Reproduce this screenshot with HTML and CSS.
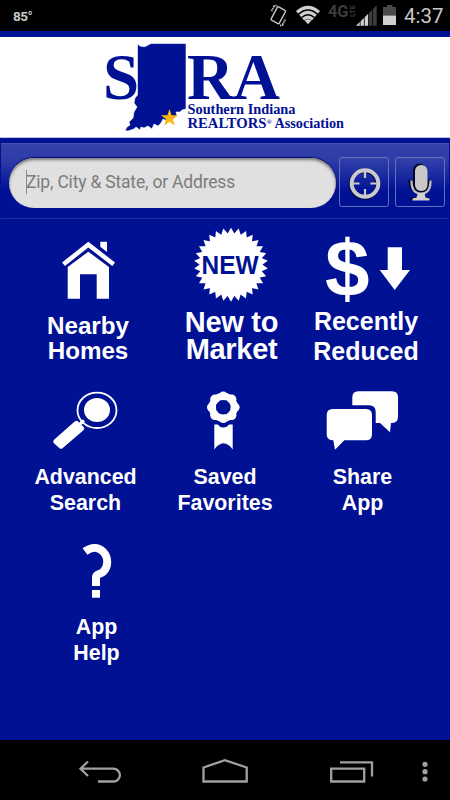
FILE: index.html
```html
<!DOCTYPE html>
<html lang="en">
<head>
    <meta charset="utf-8">
    <title>Southern Indiana REALTORS Association</title>
    <link rel="stylesheet" href="styles.css">
</head>
<body>
    <div class="statusbar">
        <span class="temp">85°</span>
        <svg class="statusicons" width="130" height="31" viewBox="268 0 130 31">
            <g fill="none" stroke="#c8c8c8" stroke-width="1.4">
                <rect x="-4.600" y="-7.500" width="9.200" height="15" rx="1" transform="translate(278.3 15.3) rotate(28)"/>
                <path d="M271.500 11l3-5.500M273.500 6l3.500-.5M280 25.500l3.500-.5M282.500 24.500l3-5.500" stroke-width="1.800" stroke-dasharray="1.300 .7"/>
            </g>
            <g fill="none" stroke="#d0d0d0" stroke-width="3.200">
                <path d="M297 12.200Q308 2.800 319 12.200"/>
                <path d="M300.200 15.900Q308 9 315.800 15.900"/>
                <path d="M303.100 19.300Q308 15 312.900 19.300"/>
            </g>
            <path d="M308 24.300l-3.300-3.800q3.300-2.400 6.600 0z" fill="#d0d0d0"/>
            <text class="net" x="328" y="17" textLength="20.500" lengthAdjust="spacingAndGlyphs">4G</text>
            <text class="lte" transform="translate(355.200 17) rotate(-90)" textLength="12" lengthAdjust="spacingAndGlyphs">LTE</text>
            <path d="M356 25.700L376.700 5.300V25.700z" fill="#3c3c3c"/>
            <path d="M356 25.700L368.500 13.400V25.700z" fill="#d0d0d0"/>
            <path d="M360.200 19v7M364.300 15v11M368.500 12v14M372.600 8v18" stroke="#000" stroke-width=".8"/>
            <path d="M387 5h5.500v2h3.500v8.500h-13v-8.500h4z" fill="#494949"/>
            <path d="M383 15.500h13v9.500h-13z" fill="#d0d0d0"/>
        </svg>
        <span class="clock">4:37</span>
    </div>

    <div class="logo">
        <svg width="450" height="100" viewBox="0 37 450 100">
            <g class="logotext">
                <text class="big" x="103" y="99">S</text>
                <text class="big" x="187" y="99" textLength="93">RA</text>
                <text class="small" x="187.500" y="113.500" textLength="108" lengthAdjust="spacingAndGlyphs">Southern Indiana</text>
                <text class="small" x="187.500" y="127.500" textLength="79" lengthAdjust="spacingAndGlyphs">REALTORS</text>
                <text class="reg" x="266.500" y="123.500">®</text>
                <text class="small" x="274.500" y="127.500" textLength="69.500" lengthAdjust="spacingAndGlyphs">Association</text>
            </g>
            <path d="M137.500 44L140 46Q145 48 148 45L151 43.500H186V109L182 110 180 112 176 112 177 116 173 119 171 122 167 121 163 119 161 123 158 126 154 124 152 129 148 126 144 128 141 127 140 130 136 127 134 129 131 130 128 131 125 130.500 127 127 130 125 129 122 133 118 134 112 137 107 134 103 135 98 137.500 95z" fill="#001194" stroke="#fff" stroke-width=".6"/>
            <path d="M169.500 109l2.100 6.200 6.400.1-5.100 3.900 1.900 6.200-5.300-3.700-5.300 3.700 1.900-6.200-5.100-3.900 6.400-.1z" fill="#ffb612"/>
        </svg>
    </div>

    <div class="searchbar">
        <div class="searchinput"><span class="cursor"></span>Zip, City &amp; State, or Address</div>
        <div class="searchbut">
            <svg width="48" height="48" viewBox="340 157 48 48">
                <circle cx="364" cy="183.500" r="13.500" fill="none" stroke="#000a55" stroke-width="4"/>
                <circle cx="365" cy="182.500" r="13.300" fill="none" stroke="#cacaca" stroke-width="4"/>
                <path d="M365 171v6M365 188v6M353.500 182.500h6M370.500 182.500h6" stroke="#cacaca" stroke-width="2.200"/>
            </svg>
        </div>
        <div class="searchbut">
            <svg width="48" height="48" viewBox="396 157 48 48">
                <g transform="translate(-1.500 -1)" fill="#000528" stroke="#000528">
                    <rect x="415" y="164" width="12" height="26" rx="6"/>
                    <path d="M411.500 180q0 12 9.500 12t9.500-12M421 192v6M412.500 198.500h17" fill="none" stroke-width="3"/>
                </g>
                <rect x="415" y="164" width="12.500" height="26" rx="6" fill="#c8c8c8"/>
                <path d="M411.500 179.500v1q0 12 9.500 12t9.500-12v-1" fill="none" stroke="#bdbdbd" stroke-width="2.200"/>
                <path d="M418 192h6.500l1 4.500 4 1v2h-17v-2l4-1z" fill="#d2d2d2"/>
            </svg>
        </div>
    </div>

    <div class="menu">
        <div class="item nearby">
            <svg width="150" height="84" viewBox="0 219 150 84">
                <path d="M62 262.500L88.300 241.700 115 262.500 112.300 266 88.300 247.500 65 266z"/>
                <path d="M100.300 241.700H107V252L100.300 246.700z"/>
                <path d="M67.700 267L88.300 251.700 109 267V298.700H96.700V274.300H80V298.700H67.700z"/>
            </svg>
            <p>Nearby<br>Homes</p>
        </div>
        <div class="item newmarket">
            <svg width="150" height="84" viewBox="150 219 150 84">
                <defs><path id="tri" d="M0-37L32 18.500H-32z"/></defs>
                <g transform="translate(231 264.700)">
                    <use href="#tri"/>
                    <use href="#tri" transform="rotate(12)"/>
                    <use href="#tri" transform="rotate(24)"/>
                    <use href="#tri" transform="rotate(36)"/>
                    <use href="#tri" transform="rotate(48)"/>
                    <use href="#tri" transform="rotate(60)"/>
                    <use href="#tri" transform="rotate(72)"/>
                    <use href="#tri" transform="rotate(84)"/>
                    <use href="#tri" transform="rotate(96)"/>
                    <use href="#tri" transform="rotate(108)"/>
                </g>
                <text class="newtext" x="201.500" y="273.500" textLength="57" lengthAdjust="spacingAndGlyphs">NEW</text>
            </svg>
            <p>New to<br>Market</p>
        </div>
        <div class="item reduced">
            <svg width="150" height="84" viewBox="300 219 150 84">
                <text class="dollar" x="325" y="295.500">$</text>
                <path d="M387.700 247.300H402V270H410L394.700 290 379.700 270H387.700z"/>
            </svg>
            <p>Recently<br>Reduced</p>
        </div>
        <div class="item search">
            <svg width="150" height="84" viewBox="0 371 150 84">
                <ellipse cx="97" cy="410.300" rx="19.500" ry="17.700" fill="none" stroke="#fff" stroke-width="1.800"/>
                <ellipse cx="97" cy="410" rx="13" ry="12"/>
                <path d="M76.500 423L82 428.500 61 446.500 55.500 441.500z" stroke="#fff" stroke-width="4.500" stroke-linejoin="round"/>
                <path d="M80 424l4-3.500" stroke="#fff" stroke-width="3"/>
            </svg>
            <p>Advanced<br>Search</p>
        </div>
        <div class="item saved">
            <svg width="150" height="84" viewBox="150 371 150 84">
                <g transform="translate(223.300 407.300)">
                    <circle r="11" fill="none" stroke="#fff" stroke-width="7"/>
                    <circle cx="0" cy="-11" r="4.800"/>
                    <circle cx="8.300" cy="-8" r="4.800"/>
                    <circle cx="11.500" cy="0" r="4.800"/>
                    <circle cx="8.300" cy="8" r="4.800"/>
                    <circle cx="0" cy="11" r="4.800"/>
                    <circle cx="-8.300" cy="8" r="4.800"/>
                    <circle cx="-11.500" cy="0" r="4.800"/>
                    <circle cx="-8.300" cy="-8" r="4.800"/>
                    <circle r="7.300" fill="#001194"/>
                </g>
                <path d="M214.300 424.500H218Q219.500 427.500 223.300 427.500T229 424.500H232.700V449.500Q228.500 443.500 223.500 443.300 218.500 443.500 214.300 449.500z"/>
            </svg>
            <p>Saved<br>Favorites</p>
        </div>
        <div class="item share">
            <svg width="150" height="84" viewBox="300 371 150 84">
                <path d="M332.700 409H366q6 0 6 6v19.300q0 6-6 6H344.300L335 449.700 333.300 440.300q-6.600 0-6.600-6V415q0-6 6-6z"/>
                <path d="M352.300 405.300V397.300q0-6 6-6H392q6 0 6 6V417q0 6-7 6L390 432.300 380 423H375.700V412q0-6.700-6.700-6.700z"/>
            </svg>
            <p>Share<br>App</p>
        </div>
        <div class="item help">
            <svg width="150" height="84" viewBox="0 523 150 84">
                <path d="M85 551.500C91 547 98 546.500 103 551.500 108.800 557.500 108.500 567 103 572 99.500 575 96 573.500 96 577.500V586" fill="none" stroke="#fff" stroke-width="8"/>
                <path d="M92 590h8v7.700h-8z"/>
            </svg>
            <p>App<br>Help</p>
        </div>
    </div>

    <div class="navbar">
        <svg width="44" height="24" viewBox="78 759 44 24">
            <path d="M88 761.500L80.500 768.700 88 776M80.500 768.700H113.500A6.400 6.400 0 0 1 113.500 781.500H98"/>
        </svg>
        <svg width="48" height="24" viewBox="201 759 48 24">
            <path d="M203.500 781.500V767.500L224.900 760.200 246.700 767.500V781.500z"/>
        </svg>
        <svg width="46" height="24" viewBox="329 759 46 24">
            <path d="M331.200 768.700H364.200V781.500H331.200zM340 762.300H372V776.500"/>
        </svg>
        <svg class="dots" width="8" height="24" viewBox="421.300 759 8 24">
            <circle cx="425.300" cy="764.300" r="2.600"/>
            <circle cx="425.300" cy="771.700" r="2.600"/>
            <circle cx="425.300" cy="779" r="2.600"/>
        </svg>
    </div>
</body>
</html>
```
FILE: styles.css
```css
body{
    margin: 0;
    padding: 0;
    width: 450px;
    height: 800px;
    overflow: hidden;
    display: flex;
    flex-direction: column;
    background-color: #001194;
    font-family: "Liberation Sans", Arial, sans-serif;
}
svg{
    display: block;
    overflow: visible;
}

.statusbar{
    display: flex;
    height: 31px;
    background-color: black;
    color: #c8c8c8;
    font-family: Roboto, sans-serif;
}
.temp{
    width: 255px;
    padding-left: 13px;
    font-size: 13.5px;
    font-weight: bold;
    letter-spacing: -0.5px;
    line-height: 33px;
}
.clock{
    padding-left: 6px;
    font-size: 20.5px;
    line-height: 32px;
}
.net{
    fill: #3c3c3c;
    font-size: 17px;
    font-weight: bold;
}
.lte{
    fill: #3c3c3c;
    font-size: 7.5px;
    font-weight: bold;
}

.logo{
    margin-top: 6px;
    height: 100px;
    background-color: white;
    border-bottom: 1px solid #c0c0e0;
}
.logotext{
    fill: #001194;
    font-family: "Liberation Serif", "Times New Roman", serif;
    font-weight: bold;
}
.big{
    font-size: 65px;
}
.small{
    font-size: 14px;
}
.reg{
    font-size: 7px;
}

.searchbar{
    box-sizing: border-box;
    display: flex;
    margin: 5px 1px 0 1px;
    height: 76px;
    padding: 13px 4px 0 8px;
    border-top: 1px solid #4450b4;
    border-bottom: 1px solid #2330a0;
    background: linear-gradient(#3442ac 0, #2f3ca8 16px, #001194 46px);
}
.searchinput{
    box-sizing: border-box;
    display: flex;
    align-items: center;
    width: 327px;
    height: 50px;
    margin-top: 1px;
    padding: 0 0 2px 17px;
    border-radius: 25px;
    background-color: #e0e0e0;
    box-shadow: inset 0 2px 3px #777, 0 -1px 1px #001070;
    color: #7c7c7c;
    font-family: Roboto, sans-serif;
    font-size: 17.5px;
    letter-spacing: -0.19px;
}
.cursor{
    width: 1px;
    height: 24px;
    margin-right: -1px;
    background-color: #888;
}
.searchbut{
    width: 48px;
    height: 48px;
    margin-left: 3px;
    border: 1px solid #6470b8;
    border-radius: 3px;
    background: linear-gradient(#3442ac 0, #001194 34px);
}
.searchbut + .searchbut{
    margin-left: 6px;
}

.menu{
    flex: 1;
    display: grid;
    grid-template-columns: repeat(3, 150px);
    grid-auto-rows: 152px;
    align-content: start;
    color: white;
    font-weight: bold;
    text-align: center;
}
.item svg{
    fill: white;
}
.item p{
    margin: 8.5px 0 0 0;
    font-size: 21.4px;
    line-height: 26px;
}
.nearby p{
    margin-top: 9.5px;
    padding-left: 26px;
    font-size: 24.2px;
    line-height: 25px;
}
.newmarket p{
    margin-top: 6px;
    padding-left: 13px;
    font-size: 29px;
    letter-spacing: -0.3px;
    line-height: 27px;
}
.reduced p{
    margin-top: 4px;
    padding-right: 18px;
    font-size: 25px;
    line-height: 29.5px;
}
.search p{
    padding-left: 21px;
}
.share p{
    padding-right: 25px;
}
.help p{
    margin-top: 6.5px;
    padding-left: 43px;
}
.newtext{
    fill: #001194;
    font-size: 25px;
}
.dollar{
    font-size: 80px;
}

.navbar{
    box-sizing: border-box;
    display: flex;
    gap: 79px;
    height: 60px;
    padding: 19px 0 0 78px;
    background-color: black;
}
.navbar svg{
    fill: none;
    stroke: #a0a0a0;
    stroke-width: 2.3px;
}
.navbar svg:nth-child(3){
    margin-left: 1px;
}
.navbar .dots{
    margin-left: -32.7px;
    fill: #a0a0a0;
    stroke: none;
}
```
